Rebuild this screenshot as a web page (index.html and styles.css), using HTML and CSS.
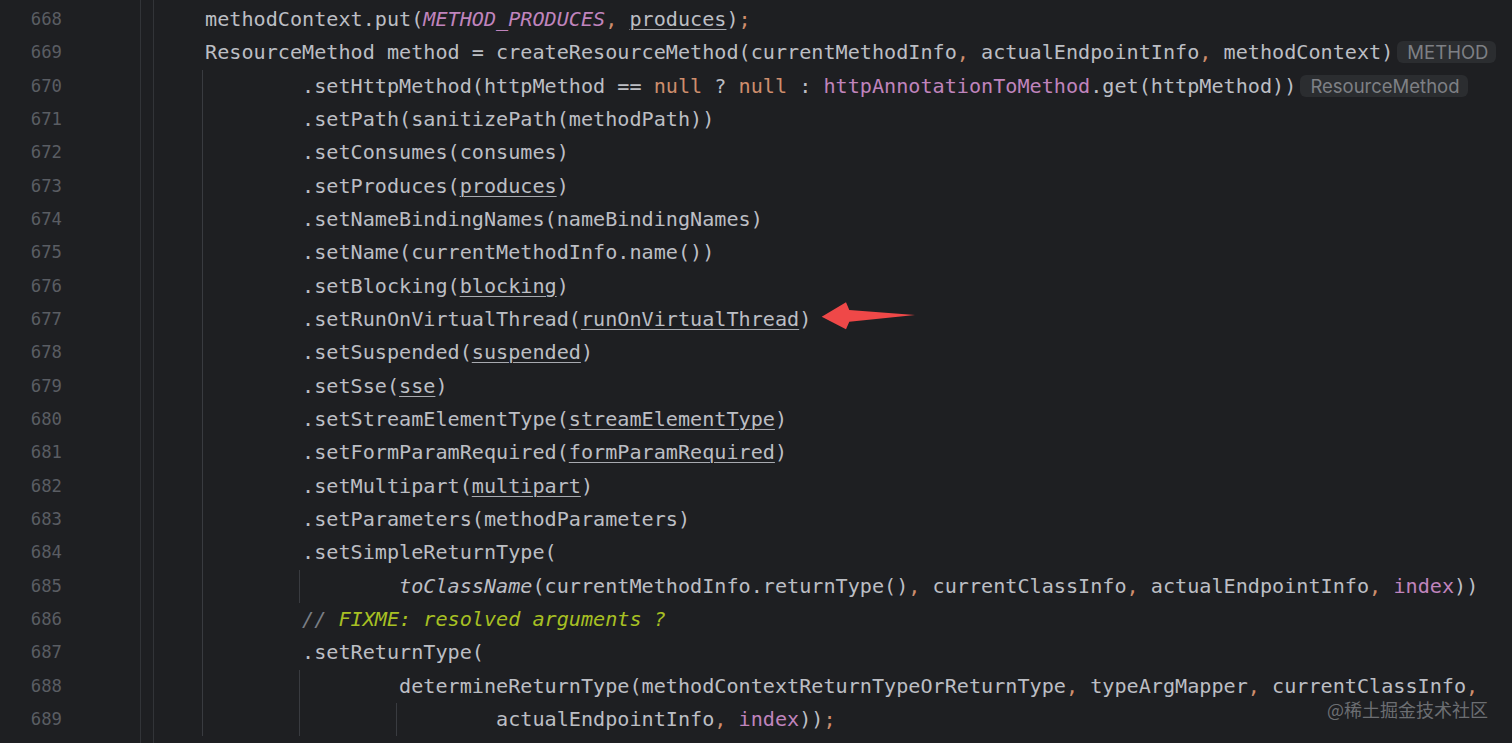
FILE: index.html
```html
<!DOCTYPE html>
<html lang="en">
<head>
<meta charset="utf-8">
<title>Editor</title>
<link rel="stylesheet" href="styles.css">
</head>
<body>
<div class="editor">
  <div class="gutter">
    <div class="ln">668</div><div class="ln">669</div><div class="ln">670</div><div class="ln">671</div>
    <div class="ln">672</div><div class="ln">673</div><div class="ln">674</div><div class="ln">675</div>
    <div class="ln">676</div><div class="ln">677</div><div class="ln">678</div><div class="ln">679</div>
    <div class="ln">680</div><div class="ln">681</div><div class="ln">682</div><div class="ln">683</div>
    <div class="ln">684</div><div class="ln">685</div><div class="ln">686</div><div class="ln">687</div>
    <div class="ln">688</div><div class="ln">689</div>
  </div>
  <div class="code">
    <div class="block">
      <div class="line">methodContext.put(<span class="const">METHOD_PRODUCES</span><span class="kw">,</span> <span class="re">produces</span>)<span class="kw">;</span></div>
      <div class="line">ResourceMethod method = createResourceMethod(currentMethodInfo<span class="kw">,</span> actualEndpointInfo<span class="kw">,</span> methodContext)<span class="hint">METHOD</span></div>
      <div class="line"><span class="ind g"></span>.setHttpMethod(httpMethod == <span class="kw">null</span> ? <span class="kw">null</span> : <span class="field">httpAnnotationToMethod</span>.get(httpMethod))<span class="hint">ResourceMethod</span></div>
      <div class="line"><span class="ind g"></span>.setPath(sanitizePath(methodPath))</div>
      <div class="line"><span class="ind g"></span>.setConsumes(consumes)</div>
      <div class="line"><span class="ind g"></span>.setProduces(<span class="re">produces</span>)</div>
      <div class="line"><span class="ind g"></span>.setNameBindingNames(nameBindingNames)</div>
      <div class="line"><span class="ind g"></span>.setName(currentMethodInfo.name())</div>
      <div class="line"><span class="ind g"></span>.setBlocking(<span class="re">blocking</span>)</div>
      <div class="line"><span class="ind g"></span>.setRunOnVirtualThread(<span class="re">runOnVirtualThread</span>)</div>
      <div class="line"><span class="ind g"></span>.setSuspended(<span class="re">suspended</span>)</div>
      <div class="line"><span class="ind g"></span>.setSse(<span class="re">sse</span>)</div>
      <div class="line"><span class="ind g"></span>.setStreamElementType(<span class="re">streamElementType</span>)</div>
      <div class="line"><span class="ind g"></span>.setFormParamRequired(<span class="re">formParamRequired</span>)</div>
      <div class="line"><span class="ind g"></span>.setMultipart(<span class="re">multipart</span>)</div>
      <div class="line"><span class="ind g"></span>.setParameters(methodParameters)</div>
      <div class="line"><span class="ind g"></span>.setSimpleReturnType(</div>
      <div class="line"><span class="ind g"></span><span class="ind g"></span><span class="static">toClassName</span>(currentMethodInfo.returnType()<span class="kw">,</span> currentClassInfo<span class="kw">,</span> actualEndpointInfo<span class="kw">,</span> <span class="field">index</span>))</div>
      <div class="line"><span class="ind g"></span><span class="cmt">// </span><span class="todo">FIXME: resolved arguments ?</span></div>
      <div class="line"><span class="ind g"></span>.setReturnType(</div>
      <div class="line"><span class="ind g"></span><span class="ind g"></span>determineReturnType(methodContextReturnTypeOrReturnType<span class="kw">,</span> typeArgMapper<span class="kw">,</span> currentClassInfo<span class="kw">,</span></div>
      <div class="line"><span class="ind g"></span><span class="ind g"></span><span class="ind g"></span>actualEndpointInfo<span class="kw">,</span> <span class="field">index</span>))<span class="kw">;</span></div>
    </div>
  </div>
</div>
<svg class="arrow" width="105" height="36" viewBox="0 0 105 36" aria-hidden="true">
  <polygon points="6.7,18.7 31,4.3 34.3,12 100,17 34.3,23.7 31,31.3" fill="#ef4848"/>
</svg>
<div class="watermark">@稀土掘金技术社区</div>
</body>
</html>
```

FILE: styles.css
```css
html, body {
  margin: 0;
  padding: 0;
  background: #1e1f22;
  overflow: hidden;
}

body {
  width: 1512px;
  height: 743px;
  position: relative;
}

.editor {
  display: flex;
  height: 743px;
  padding-top: 3px;
  box-sizing: border-box;
  background: #1e1f22;
}

.gutter {
  width: 141px;
  flex: none;
  box-sizing: border-box;
  padding-right: 78px;
  text-align: right;
  border-right: 1px solid #323438;
  margin-top: -3px;
  padding-top: 3px;
  font-family: "DejaVu Sans Mono", "Liberation Mono", monospace;
  font-size: 17.3px;
  color: #5a5d63;
}

.ln {
  height: 33.33px;
  line-height: 33.33px;
}

.code {
  flex: 1;
  padding-left: 12px;
  margin-top: -3px;
}

.block {
  border-left: 1px solid #323438;
  padding-left: 51px;
  height: 100%;
  padding-top: 3px;
  box-sizing: border-box;
  font-family: "DejaVu Sans Mono", "Liberation Mono", monospace;
  font-size: 20.15px;
  color: #bcbec4;
}

.line {
  height: 33.33px;
  line-height: 33.33px;
  white-space: pre;
}

.ind {
  display: inline-block;
  width: 8ch;
  height: 33.33px;
  vertical-align: top;
  position: relative;
}

.ind.g::before {
  content: "";
  position: absolute;
  left: -3px;
  top: 0;
  bottom: 0;
  border-left: 1px solid #393b40;
}

.kw { color: #cf8e6d; }

.const {
  color: #c084bd;
  font-style: italic;
}

.field { color: #c084bd; }

.static { font-style: italic; }

.re {
  text-decoration: underline;
  text-decoration-color: #a8aab0;
  text-decoration-thickness: 1px;
  text-underline-offset: 3px;
}

.cmt {
  color: #7a7e85;
  font-style: italic;
}

.todo {
  color: #a8c023;
  font-style: italic;
}

.hint {
  display: inline-block;
  vertical-align: middle;
  margin-left: 4px;
  margin-top: -3px;
  padding: 0 8px 0 10px;
  height: 22px;
  line-height: 22px;
  border-radius: 6px;
  background: #2b2d30;
  color: #7e8085;
  font-family: Inter, "Noto Sans", sans-serif;
  font-size: 18.5px;
}

.arrow {
  position: absolute;
  left: 815px;
  top: 298px;
}

.watermark {
  position: absolute;
  right: 24px;
  top: 697px;
  font-family: "Noto Sans CJK SC", sans-serif;
  font-size: 18px;
  color: #6c6e72;
  line-height: 24px;
}
```
